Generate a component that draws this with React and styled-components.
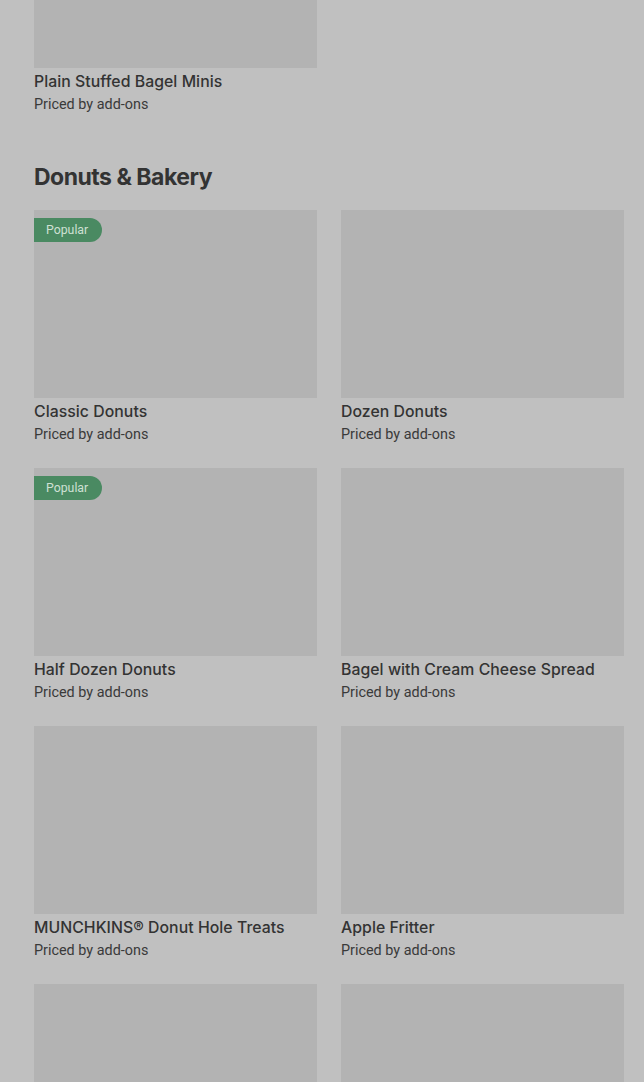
import React from "react";
import styled, { createGlobalStyle } from "styled-components";

const Global = createGlobalStyle`
  html, body { margin: 0; padding: 0; background: #c0c0c0; }
  body { font-family: Inter, "Noto Sans", sans-serif; color: #333; overflow: hidden; }
`;

const Page = styled.div`
  height: 1082px;
  overflow: hidden;
  padding: 0 20px 0 34px;
`;

const Section = styled.section`
  margin-top: ${(p) => p.$top || 0}px;
`;

const Heading = styled.h2`
  margin: 0 0 17px;
  font-size: 23px;
  line-height: 32px;
  font-weight: 700;
  letter-spacing: -0.5px;
  color: #333;
`;

const Grid = styled.div`
  display: grid;
  grid-template-columns: 283px 283px;
  column-gap: 24px;
  row-gap: 23px;
`;

const Card = styled.div`
  display: flex;
  flex-direction: column;
`;

const Thumb = styled.div`
  position: relative;
  height: ${(p) => p.$h || 188}px;
  background: #b3b3b3;
`;

const Badge = styled.span`
  position: absolute;
  top: 8px;
  left: 0;
  height: 24px;
  padding: 0 14px 0 12px;
  display: flex;
  align-items: center;
  background: #4a8a62;
  color: #cfe0d4;
  font-family: Roboto, sans-serif;
  font-size: 12.3px;
  border-radius: 0 12px 12px 0;
`;

const Title = styled.div`
  margin-top: 3px;
  font-size: 15.8px;
  line-height: 22px;
  font-weight: 500;
  letter-spacing: 0.05px;
  color: #333;
`;

const Sub = styled.div`
  font-family: Roboto, sans-serif;
  font-size: 14.4px;
  line-height: 20px;
  color: #3a3a3a;
  margin-top: 2px;
`;

const items = [
  { t: "Classic Donuts", pop: true },
  { t: "Dozen Donuts" },
  { t: "Half Dozen Donuts", pop: true },
  { t: "Bagel with Cream Cheese Spread" },
  { t: "MUNCHKINS® Donut Hole Treats" },
  { t: "Apple Fritter" },
  { key: "more-1", noText: true },
  { key: "more-2", noText: true },
];

function Item({ t, pop, h, noText }) {
  return (
    <Card>
      <Thumb $h={h}>{pop && <Badge>Popular</Badge>}</Thumb>
      {!noText && (
        <>
          <Title>{t}</Title>
          <Sub>Priced by add-ons</Sub>
        </>
      )}
    </Card>
  );
}

export default function App() {
  return (
    <>
      <Global />
      <Page>
        <Grid>
          <Item t="Plain Stuffed Bagel Minis" h={68} />
        </Grid>
        <Section $top={46}>
          <Heading>Donuts &amp; Bakery</Heading>
          <Grid>
            {items.map((it) => (
              <Item key={it.t || it.key} {...it} />
            ))}
          </Grid>
        </Section>
      </Page>
    </>
  );
}
